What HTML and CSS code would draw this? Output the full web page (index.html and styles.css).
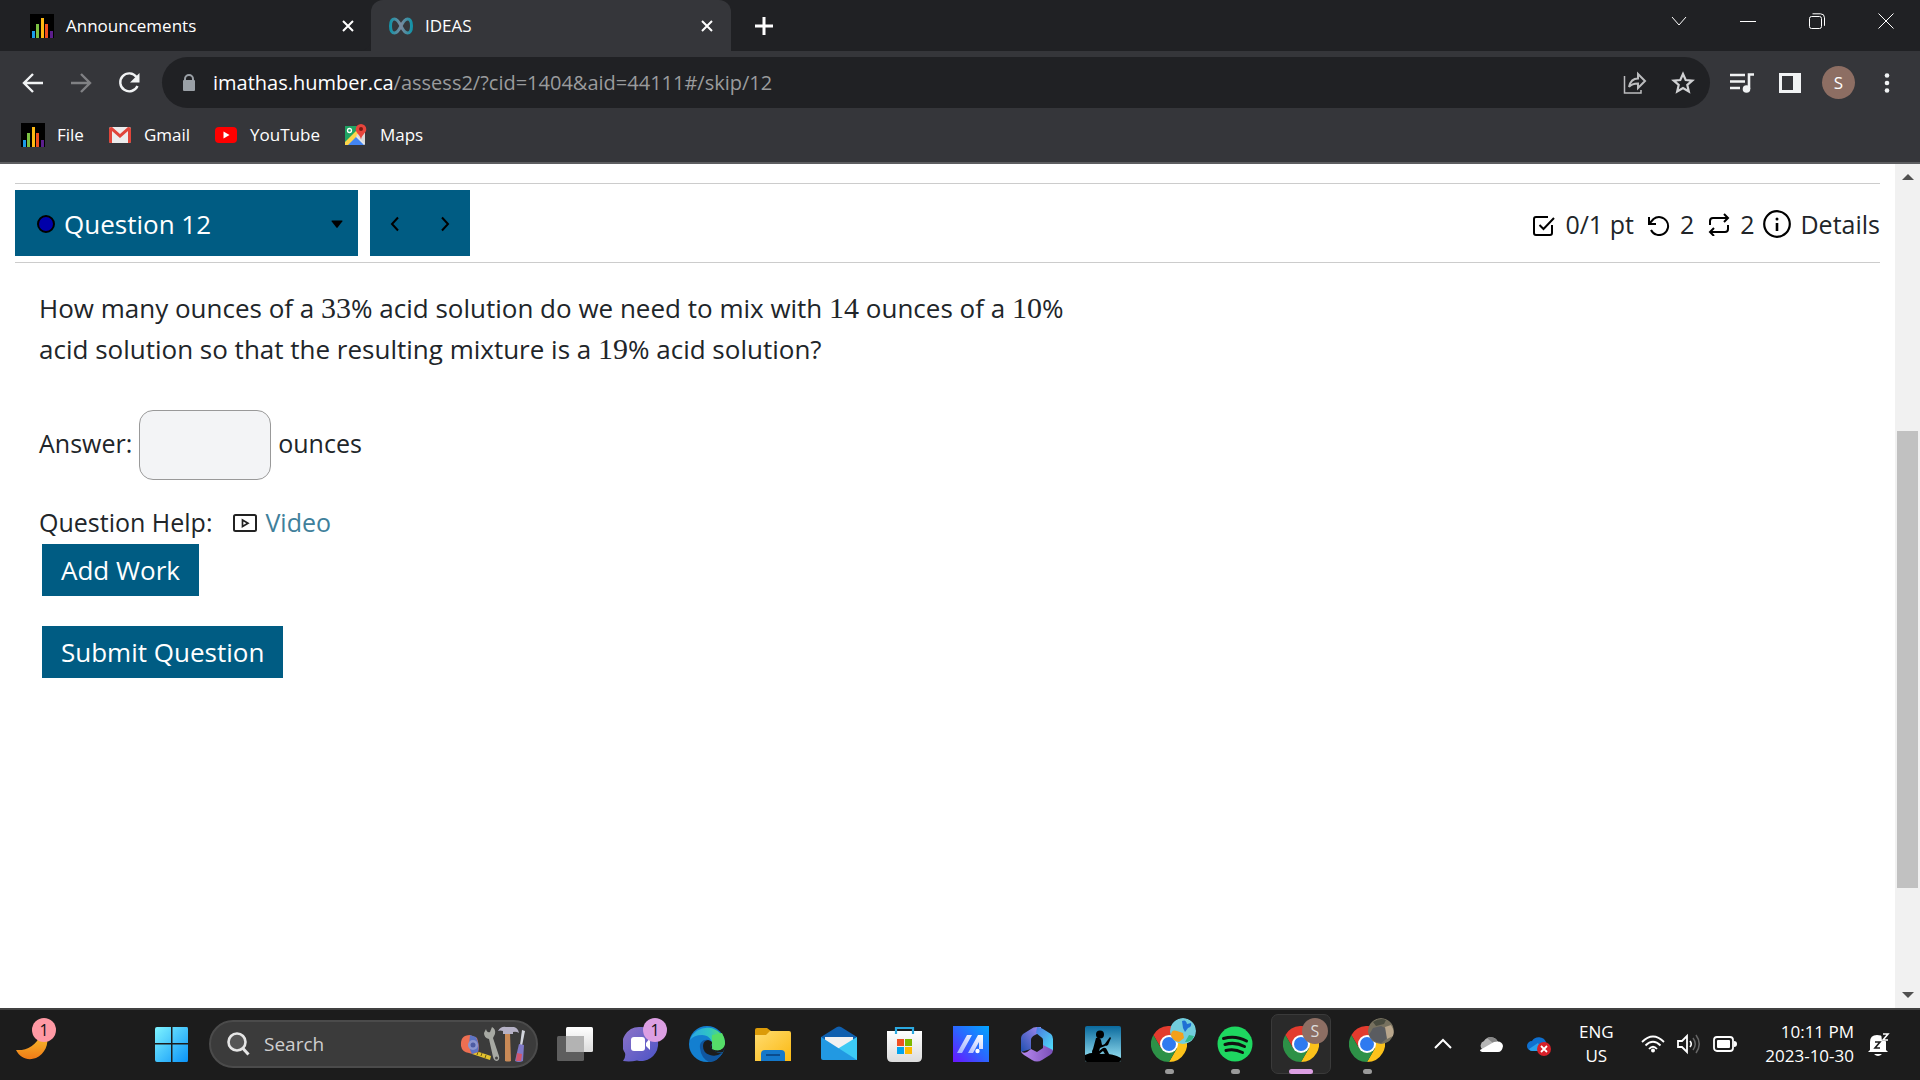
FILE: index.html
```html
<!DOCTYPE html>
<html lang="en">
<head>
<meta charset="utf-8">
<title>IDEAS</title>
<link rel="stylesheet" href="styles.css">
</head>
<body>
<svg class="defs" aria-hidden="true">
  <defs>
    <linearGradient id="gWin" x1="0" y1="0" x2="1" y2="1"><stop offset="0" stop-color="#7ff4ff"/><stop offset="1" stop-color="#0a93f8"/></linearGradient>
    <linearGradient id="gMoon" x1="0" y1="0" x2="0" y2="1"><stop offset="0" stop-color="#f6c32f"/><stop offset="1" stop-color="#f07a16"/></linearGradient>
    <linearGradient id="gChat" x1="0" y1="0" x2="1" y2="1"><stop offset="0" stop-color="#8e74c8"/><stop offset="1" stop-color="#4b53c6"/></linearGradient>
    <linearGradient id="gEdge1" x1="0" y1="0" x2="1" y2="0"><stop offset="0" stop-color="#2aa5e6"/><stop offset=".55" stop-color="#2fc4c4"/><stop offset="1" stop-color="#67e84d"/></linearGradient>
    <linearGradient id="gFold" x1="0" y1="0" x2="1" y2="1"><stop offset="0" stop-color="#ffdc70"/><stop offset="1" stop-color="#fbb912"/></linearGradient>
    <linearGradient id="gStore" x1="0" y1="0" x2="0" y2="1"><stop offset="0" stop-color="#ffffff"/><stop offset="1" stop-color="#dcdcdc"/></linearGradient>
    <linearGradient id="gMsi" x1="0" y1="1" x2="1" y2="0"><stop offset="0" stop-color="#6a14ff"/><stop offset=".5" stop-color="#2b66ff"/><stop offset="1" stop-color="#00a6ff"/></linearGradient>
    <linearGradient id="gSlash" x1="0" y1="1" x2="1" y2="0"><stop offset="0" stop-color="#9fb0ff"/><stop offset="1" stop-color="#fff"/></linearGradient>
    <linearGradient id="gM1" x1="0" y1="1" x2="1" y2="0"><stop offset="0" stop-color="#1f4fb0"/><stop offset="1" stop-color="#a58af0"/></linearGradient>
    <linearGradient id="gM2" x1="0" y1="0" x2="1" y2="1"><stop offset="0" stop-color="#4a78e0"/><stop offset="1" stop-color="#4fe2fb"/></linearGradient>
    <linearGradient id="gM3" x1="0" y1="0" x2="1" y2="0"><stop offset="0" stop-color="#b98af0"/><stop offset="1" stop-color="#7a4fb8"/></linearGradient>
    <linearGradient id="gSky" x1="0" y1="0" x2="0" y2="1"><stop offset="0" stop-color="#0a6a9e"/><stop offset="1" stop-color="#9ee6f5"/></linearGradient>
    <linearGradient id="gInf" x1="0" y1="0" x2="1" y2="0"><stop offset="0" stop-color="#1593a8"/><stop offset=".5" stop-color="#7b8a9e"/><stop offset="1" stop-color="#1593a8"/></linearGradient>
    <symbol id="bars" viewBox="0 0 24 24"><path fill="#000" d="M0 0h24v24H0z"/><path fill="#1b9be8" d="M2 17h3v7H2z"/><path fill="#7cc142" d="M6 10h3v14H6z"/><path fill="#fdb913" d="M11 4h3v20h-3z"/><path fill="#f0501e" d="M15 10h3v14h-3z"/><path fill="#5c1e8c" d="M20 17h3v7h-3z"/></symbol>
    <symbol id="close" viewBox="0 0 12 12"><path d="M1 1l10 10M11 1L1 11" stroke="#fff" stroke-width="2" fill="none"/></symbol>
    <symbol id="chrome" viewBox="0 0 36 36">
      <path fill="#e33b2e" d="M2.4 9A18 18 0 0 1 33.6 9H18l-7.8 13.5z"/>
      <path fill="#fcc21b" d="M33.6 9A18 18 0 0 1 18 36l7.8-13.5L18 9z"/>
      <path fill="#2d9147" d="M2.4 9l7.8 13.5L18 27l7.8-4.500L18 36A18 18 0 0 1 2.400 9z"/>
      <circle cx="18" cy="18" r="9" fill="#fff"/><circle cx="18" cy="18" r="7" fill="#2f7af0"/>
    </symbol>
  </defs>
</svg>

<header class="browser">
  <nav class="tabs" aria-label="Tabs">
    <div class="tab tab-first">
      <svg class="i24"><use href="#bars"/></svg><span class="tab-name">Announcements</span>
      <button class="plain" aria-label="Close Announcements"><svg class="i12"><use href="#close"/></svg></button>
    </div>
    <div class="tab tab-active">
      <svg class="i24" viewBox="0 0 24 24"><path d="M12 12C9.500 7 8 5 5.500 5S1.500 8 1.500 12s1.500 7 4 7S9.500 17 12 12s4-7 6.500-7 4 3 4 7-1.500 7-4 7S14.500 17 12 12z" fill="none" stroke="url(#gInf)" stroke-width="3"/></svg><span class="tab-name">IDEAS</span>
      <button class="plain" aria-label="Close IDEAS"><svg class="i12"><use href="#close"/></svg></button>
    </div>
    <button class="plain new-tab" aria-label="New tab"><svg class="i20" viewBox="0 0 20 20"><path d="M10 1v18M1 10h18" stroke="#fff" stroke-width="3"/></svg></button>
    <div class="window-controls">
      <button class="plain" aria-label="Search tabs"><svg class="i16" viewBox="0 0 16 16"><path d="M1 4l7 8 7-8" fill="none" stroke="#fff"/></svg></button>
      <button class="plain" aria-label="Minimize"><svg class="i16" viewBox="0 0 16 16"><path d="M0 8.500h16" stroke="#fff"/></svg></button>
      <button class="plain" aria-label="Restore"><svg class="i16" viewBox="0 0 16 16"><rect x=".5" y="3.500" width="12" height="12" rx="2" fill="none" stroke="#fff"/><path d="M3.500 .8h8q4 0 4 4v8" fill="none" stroke="#fff"/></svg></button>
      <button class="plain" aria-label="Close"><svg class="i16" viewBox="0 0 16 16"><path d="M.5.5l15 15M15.500.5l-15 15" stroke="#fff"/></svg></button>
    </div>
  </nav>

  <div class="toolbar">
    <button class="plain" aria-label="Back"><svg class="i24" viewBox="0 0 24 24"><path d="M12 3l-9 9 9 9M3 12h19" fill="none" stroke="#f1f3f4" stroke-width="2.400"/></svg></button>
    <button class="plain" aria-label="Forward"><svg class="i24" viewBox="0 0 24 24"><path d="M12 3l9 9-9 9M21 12H2" fill="none" stroke="#808184" stroke-width="2.400"/></svg></button>
    <button class="plain" aria-label="Reload"><svg class="i24" viewBox="0 0 24 24"><path d="M19.500 6A9 9 0 1 0 20.500 15" fill="none" stroke="#f1f3f4" stroke-width="2.400"/><path d="M22.500 2v9.500H13z" fill="#f1f3f4"/></svg></button>
    <div class="omnibox">
      <svg class="i20" viewBox="0 0 20 20"><path d="M6 9V6a4 4 0 0 1 8 0v3" fill="none" stroke="#9aa0a6" stroke-width="2"/><rect x="4" y="7" width="12" height="11" rx="1" fill="#9aa0a6"/></svg>
      <div class="url" role="textbox" aria-label="Address">imathas.humber.ca<span class="url-path">/assess2/?cid=1404&amp;aid=44111#/skip/12</span></div>
      <button class="plain" aria-label="Share"><svg class="i24" viewBox="0 0 24 24"><path d="M1.500 5v17H18v-3" fill="none" stroke="#bcbdbf" stroke-width="1.500"/><path d="M6 16C7 11 10 7.500 15 7.500V3l7 7-7 7v-4.500c-4 0-7 1-9 3.500z" fill="none" stroke="#bcbdbf" stroke-width="2"/></svg></button>
      <button class="plain" aria-label="Bookmark"><svg class="i24" viewBox="0 0 24 24"><path d="M12 3l2.700 6 6.600.6-5 4.400 1.500 6.500L12 17l-5.800 3.500L7.700 14l-5-4.400L9.300 9z" fill="none" stroke="#d0d1d3" stroke-width="2.200"/></svg></button>
    </div>
    <div class="tools">
      <button class="plain media" aria-label="Media"><svg class="i24" viewBox="0 0 24 24"><path d="M0 4h15M0 10.500h15M0 17h10M19 18V3.500h5" fill="none" stroke="#f1f3f4" stroke-width="2.600"/><circle cx="16.500" cy="18" r="3.800" fill="#f1f3f4"/></svg></button>
      <button class="plain" aria-label="Side panel"><svg class="i24" viewBox="0 0 24 24"><path fill-rule="evenodd" fill="#f1f3f4" d="M1 2h22v20H1zM4 5v14h11V5z"/></svg></button>
      <button class="plain avatar" aria-label="Profile">S</button>
      <button class="plain" aria-label="Menu"><svg class="i24" viewBox="0 0 24 24"><g fill="#f1f3f4"><circle cx="12" cy="4.500" r="2.300"/><circle cx="12" cy="12" r="2.300"/><circle cx="12" cy="19.500" r="2.300"/></g></svg></button>
    </div>
  </div>

  <nav class="bookmarks" aria-label="Bookmarks">
    <a href="#file"><svg class="i24"><use href="#bars"/></svg>File</a>
    <a href="#gmail"><svg class="i24" viewBox="0 0 24 24"><rect x="1" y="4" width="22" height="16" rx="2" fill="#ececec"/><path d="M1 6v13q0 1 2 1h1V8l8 7 8-7v12h1q2 0 2-1V6q0-2-3-2l-8 7-8-7Q1 4 1 6z" fill="#e0453a"/></svg>Gmail</a>
    <a href="#youtube"><svg class="i24" viewBox="0 0 24 24"><rect x="1" y="4" width="22" height="16" rx="4" fill="#f00"/><path d="M9.500 8.500v7l6-3.500z" fill="#fff"/></svg>YouTube</a>
    <a href="#maps"><svg class="i24" viewBox="0 0 24 24"><rect x="1" y="3" width="20" height="19" rx="1" fill="#e8e8e8"/><path d="M1 3h14v6L1 22z" fill="#1fa463"/><path d="M2 22l9-9 9 9z" fill="#4285f4"/><path d="M1 19L15 5l3 3L4 22H1z" fill="#fdd54a"/><path d="M12 12l9 9V11l-4-2z" fill="#dadada"/><circle cx="5.500" cy="7.500" r="2" fill="none" stroke="#fff" stroke-width="1.300"/><path d="M17 1a5.300 5.300 0 0 1 5.300 5.300c0 4-4.300 5-5.300 10.200-1-5.200-5.300-6.200-5.300-10.200A5.300 5.300 0 0 1 17 1z" fill="#e8453c"/><circle cx="17" cy="6" r="2" fill="#7d1a12"/></svg>Maps</a>
  </nav>
</header>

<div class="viewport">
  <main class="page">
    <div class="question-bar">
      <button class="blue picker"><span class="dot"></span><span class="picker-name">Question 12</span><svg class="i12" viewBox="0 0 12 12"><path d="M1 2.500h10q.8 0 .3 1L6.600 9.600q-.6.700-1.200 0L.7 3.500q-.5-1 .3-1z" fill="#000"/></svg></button>
      <div class="pager">
        <button class="blue" aria-label="Previous question"><svg class="i16" viewBox="0 0 16 16"><path d="M11 1.500L5 8l6 6.500" fill="none" stroke="#000" stroke-width="2"/></svg></button>
        <button class="blue" aria-label="Next question"><svg class="i16" viewBox="0 0 16 16"><path d="M5 1.500L11 8l-6 6.500" fill="none" stroke="#000" stroke-width="2"/></svg></button>
      </div>
      <div class="score">
        <svg class="i24" viewBox="0 0 24 24"><g fill="none" stroke="#000" stroke-width="2"><path d="M16 5H4q-2 0-2 2v14q0 2 2 2h14q2 0 2-2v-8"/><path d="M7.500 13l4 4L22 6"/></g></svg><span>0/1 pt</span>
        <svg class="i24" viewBox="0 0 24 24"><g fill="none" stroke="#000" stroke-width="2"><path d="M2 5v7h7"/><path d="M2.500 11.500l4-4.500A9 9 0 1 1 4 18"/></g></svg><span>2</span>
        <svg class="i24" viewBox="0 0 24 24"><g fill="none" stroke="#000" stroke-width="2"><path d="M17 2l4 4-4 4M3 13V9q0-3 3-3h15M7 24l-4-4 4-4M21 13v4q0 3-3 3H3"/></g></svg><span>2</span>
        <button class="plain details"><svg class="i28" viewBox="0 0 28 28"><circle cx="14" cy="14" r="12.800" fill="none" stroke="#000" stroke-width="2.200"/><path d="M14 13v8" stroke="#000" stroke-width="2.600"/><circle cx="14" cy="9" r="1.500"/></svg>Details</button>
      </div>
    </div>

    <section class="question">
      <p class="prompt">How many ounces of a <span class="math">33</span>% acid solution do we need to mix with <span class="math">14</span> ounces of a <span class="math">10</span>%<br>acid solution so that the resulting mixture is a <span class="math">19</span>% acid solution?</p>
      <div class="answer"><label for="answer">Answer:</label><input id="answer" type="text"><span>ounces</span></div>
      <div class="help"><span>Question Help:</span><svg class="i24" viewBox="0 0 24 24"><rect x="1" y="4" width="22" height="16" rx="1.500" fill="none" stroke="#222" stroke-width="2"/><path d="M9.500 9v6.500L15 12.200z" fill="none" stroke="#222" stroke-width="1.700"/></svg><a href="#video">Video</a></div>
      <div class="actions">
        <button class="blue action">Add Work</button>
        <button class="blue action">Submit Question</button>
      </div>
    </section>
  </main>
  <div class="scrollbar" aria-hidden="true">
    <svg class="i12" viewBox="0 0 12 12"><path d="M0 9l6-6 6 6z" fill="#505050"/></svg>
    <div class="track"><div class="before"></div><div class="thumb"></div><div class="after"></div></div>
    <svg class="i12" viewBox="0 0 12 12"><path d="M0 3l6 6 6-6z" fill="#505050"/></svg>
  </div>
</div>

<footer class="taskbar">
  <button class="plain app weather" aria-label="Weather"><svg class="i36" viewBox="0 0 36 36"><path d="M0 24C10 25 20 20 25 8q2-2 6 1c2 9-2 19-11 23-8 3-16 0-20-8z" fill="url(#gMoon)"/></svg><span class="badge pink">1</span></button>
  <div class="launch">
    <button class="plain" aria-label="Start"><svg class="i36" viewBox="0 0 36 36"><path d="M1 3q0-2 2-2h14v16H1zM18.500 1H33q1 0 1 2v14H18.500zM1 18.500h16V36H3q-2 0-2-2zM18.500 18.500H34V34q0 2-1 2H18.500z" fill="url(#gWin)"/></svg></button>
    <label class="search">
      <svg class="i24" viewBox="0 0 24 24"><circle cx="11" cy="10" r="8.500" fill="#555" stroke="#e6e6e6" stroke-width="2.600"/><path d="M17 16.500l5.500 6" stroke="#e6e6e6" stroke-width="3"/></svg>
      <input type="text" placeholder="Search" aria-label="Search">
      <svg class="toolkit" viewBox="0 0 66 36">
        <path d="M13 24l18 6-1 4-18-6z" fill="#e2c22f"/><path d="M18 26l-1 3M22 27l-1 3M26 29l-1 3" stroke="#6e5a10"/>
        <path d="M1 20Q0 9 10 9l7 3q3 9 1 14-5 3-9 1Q2 26 1 20z" fill="#ee6f52"/><path d="M10 9l6 2q4 8 2 15l-6 2q-4-6-2-19z" fill="#5d74c4"/><circle cx="13" cy="19" r="5" fill="#8b95cf"/><circle cx="13" cy="19" r="2.500" fill="#4d5ca4"/>
        <path d="M26 3q1 4 4 3l2-5q4 2 3 7l-2 4 6 18q1 4-2 5-3 0-4-4l-4-18q-5-1-5-6z" fill="#a7a9a3"/><circle cx="36.500" cy="32" r="1.500" fill="#444"/>
        <path d="M45 7h5l1 28q-3 1-6 0z" fill="#c98a57"/><path d="M38 5q3-5 8-4h8q4 1 5 6-3-2-6-1v2H43V5q-3-1-5 0z" fill="#b5b1c6"/>
        <path d="M62 4l3 1-3 15-2-1z" fill="#d3d6dd"/><path d="M59 18l5 1-1 16q-4 2-8 0z" fill="#7f79c7"/><path d="M57 27l5 1-1 7h-5z" fill="#d0566e"/>
      </svg>
    </label>
    <button class="plain app" aria-label="Task view"><svg class="i36" viewBox="0 0 36 36"><rect x="9" y="1" width="27" height="25" rx="1.500" fill="url(#gStore)"/><rect y="10" width="27" height="25" rx="1.500" fill="#5e5e5e"/><path d="M9 10h18v16H9z" fill="#b3b3b3"/></svg></button>
    <button class="plain app" aria-label="Chat"><svg class="i36" viewBox="0 0 36 36"><path d="M18 1a17 17 0 1 1-4 33.500Q7 36 0 35q3-4 2-8A17 17 0 0 1 18 1z" fill="url(#gChat)"/><rect x="8" y="11" width="14" height="14" rx="3" fill="#fff"/><path d="M23 17l4-5v12l-4-4z" fill="#fff"/></svg><span class="badge lilac">1</span></button>
    <button class="plain app" aria-label="Edge"><svg class="i36" viewBox="0 0 36 36"><circle cx="18" cy="18" r="18" fill="#137fd0"/><path d="M1 14A18 18 0 0 1 36 18c0 7-8 8-12 5-1-1-3-2-1-5 0-5-4-9-10-9Q5 9 1 14z" fill="url(#gEdge1)"/><path d="M11 22c-1-6 4-9 8-8q4 1 4 4-2 1-1 4 5 6 12 4-5 10-14 10-8-4-9-14z" fill="#10569f"/><path d="M23 18q-2 2-1 4 4 6 12 4l3-6-2-2q-1 7-8 6-5-1-4-6z" fill="#1c1c1c"/><path d="M14 20q0-5 5-6 5 1 4 4-2 1-1 4 5 6 11 5-6 4-12 2-7-2-7-9z" fill="#1c1c1c"/><path d="M36 17c0 7-8 9-13 6 0-2 1-3 0-6V9l10-2q3 5 3 10z" fill="#55dd68"/></svg></button>
    <button class="plain app" aria-label="File Explorer"><svg class="i36" viewBox="0 0 36 36"><path d="M0 4q0-2 2-2h10l4 3v6H0z" fill="#dc9b08"/><path d="M0 9h11l4-4h19q2 0 2 2v28H0z" fill="url(#gFold)"/><path d="M6 35v-7q0-4 4-4h16q4 0 4 4v7z" fill="#1478ca"/><path d="M11 29h14" stroke="#0b4c8d" stroke-width="2"/></svg></button>
    <button class="plain app" aria-label="Mail"><svg class="i36" viewBox="0 0 36 36"><path d="M0 11L16 1q2-1 4 0l16 10v4H0z" fill="#0f5fae"/><path d="M4 11h28v10L18 28 4 21z" fill="#f1f1f1"/><path d="M36 11v23H4l14-12z" fill="#3ccaf4"/><path d="M0 11l36 23H2q-2 0-2-2z" fill="#2299e2"/></svg></button>
    <button class="plain app" aria-label="Store"><svg class="i36" viewBox="0 0 36 36"><path d="M0 5h35v26q0 5-5 5H5q-5 0-5-5z" fill="url(#gStore)"/><path d="M9 8V2h17v6" fill="none" stroke="#2ba9e0" stroke-width="2.200"/><path d="M10 13h7v7h-7z" fill="#f05023"/><path d="M18 13h7v7h-7z" fill="#7db900"/><path d="M10 21h7v7h-7z" fill="#01a3ee"/><path d="M18 21h7v7h-7z" fill="#feb800"/></svg></button>
    <button class="plain app" aria-label="MSI Center"><svg class="i36" viewBox="0 0 36 36"><path d="M0 0h36v36H0z" fill="url(#gMsi)"/><path d="M4 27L14 9h5L9 27zM15 27L25 9h5v14h-4v-7l-6 11z" fill="url(#gSlash)"/><circle cx="24.500" cy="25" r="2.200" fill="#fff"/></svg></button>
    <button class="plain app" aria-label="Microsoft 365"><svg class="i36" viewBox="0 0 36 36"><path d="M18 1q-4 0-6 2L4 8q-2 2-2 4v14l10-3V14q0-3 4-5l6-3V1z" fill="url(#gM1)"/><path d="M18 1q3 0 6 2l8 5q2 2 2 5v12l-10-4v-7q0-2-2-3l-5-4z" fill="url(#gM2)"/><path d="M2 25q2 3 6 1l4-3 6 3 6-4 0-3 10 5q0 3-3 5l-8 5q-5 3-10 0l-8-5q-3-2-3-4z" fill="url(#gM3)"/><path d="M18 12l6 4v5l-6 4-6-4v-5z" fill="#1c1c1c"/></svg></button>
    <button class="plain app" aria-label="Kindle"><svg class="i36" viewBox="0 0 36 36"><rect width="36" height="36" rx="2" fill="url(#gSky)"/><path d="M0 29q8-4 16-1 10-1 20 4v2q0 2-2 2H2q-2 0-2-2z"/><circle cx="15" cy="8.500" r="4"/><path d="M11 12q4-1 5 2l1 5 4-1-1 2-5 2-1 3 4-3q3-1 4 2l2 4h-4l-2-3-5 4H8q-2-3 0-6z"/><path d="M19 19l6-8 1 1-3 7-2 1z"/></svg></button>
    <button class="plain app running" aria-label="Chrome"><svg class="i36"><use href="#chrome"/></svg><svg class="profile" viewBox="0 0 26 26"><circle cx="13" cy="13" r="13" fill="#72cddd"/><path d="M1 18q0-7 6-5l6 2 1 5-5 4Q3 23 1 18z" fill="#f4a01c"/><path d="M12 3q4-2 5 3l4-1q1 4-3 5l-3 4-2-4z" fill="#1f6fd4"/><path d="M15 24l4-7 5 1q-2 6-9 6z" fill="#33b98c"/></svg></button>
    <button class="plain app running" aria-label="Spotify"><svg class="i36" viewBox="0 0 36 36"><circle cx="18" cy="18" r="17.500" fill="#1ed760"/><path d="M6.500 12.500q12-3.500 23 2.500M8 18.500q10-3 19.500 2M9 24.500q8.500-2 16.500 2" fill="none" stroke="#111" stroke-width="3" stroke-linecap="round"/></svg></button>
    <button class="plain app running current" aria-label="Chrome, IDEAS"><svg class="i36"><use href="#chrome"/></svg><span class="profile letter">S</span></button>
    <button class="plain app running" aria-label="Chrome, third profile"><svg class="i36"><use href="#chrome"/></svg><svg class="profile" viewBox="0 0 26 26"><circle cx="13" cy="13" r="13" fill="#77715f"/><path d="M1 17l4-7 8-2 6 3 2 8-8 6Q4 24 1 17z" fill="#5a5c60"/><path d="M17 9l6-2q4 6 2 11l-6 3z" fill="#b9a68c"/><path d="M5 4q7-5 13-2l-2 4-8 2z" fill="#4a4c40"/></svg></button>
  </div>
  <div class="tray">
    <button class="plain" aria-label="Hidden icons"><svg class="i24" viewBox="0 0 24 24"><path d="M4 16l8-8 8 8" fill="none" stroke="#fff" stroke-width="2"/></svg></button>
    <svg class="i24" viewBox="0 0 24 24"><path d="M4 18a5 5 0 0 1 1-9 8 8 0 0 1 14 1 5 5 0 0 1 3 8z" fill="#b5b5b5"/><path d="M8 6a8 8 0 0 1 11 4l-5 1z" fill="#878787"/><path d="M1 18l14-8q8-2 9 4-1 6-5 6H5q-4 0-4-2z" fill="#fff"/></svg>
    <svg class="i24" viewBox="0 0 24 24"><path d="M5 19a5 5 0 0 1 0-10 8 8 0 0 1 14 1v9z" fill="#0f6fce"/><path d="M2 17l9-6 5 8H5q-2 0-3-2z" fill="#28a0ec"/><circle cx="17" cy="17" r="7" fill="#d8202a"/><path d="M14 14l6 6M20 14l-6 6" stroke="#fff" stroke-width="1.800"/></svg>
    <button class="plain lang">ENG<br>US</button>
    <div class="status">
      <svg class="i24" viewBox="0 0 24 24"><g fill="none" stroke="#fff" stroke-width="1.800"><path d="M1 10q11-11 22 0M4.500 13.500q7.500-7.500 15 0M8 17q4-4.500 8 0"/></g><circle cx="12" cy="18.500" r="2" fill="#fff"/></svg>
      <svg class="i24" viewBox="0 0 24 24"><path d="M1 9h4l5-5v16l-5-5H1z" fill="none" stroke="#fff" stroke-width="1.800"/><path d="M13 9q2.500 3 0 6" fill="none" stroke="#fff" stroke-width="1.600"/><path d="M16 6q4.500 6 0 12M19 3q6.500 9 0 18" fill="none" stroke="#666" stroke-width="1.500"/></svg>
      <svg class="i24" viewBox="0 0 24 24"><rect x="1" y="5" width="19" height="14" rx="3" fill="none" stroke="#fff" stroke-width="1.800"/><rect x="4" y="8" width="13" height="8" rx="1" fill="#fff"/><path d="M21 9q3 0 3 3t-3 3z" fill="#fff"/></svg>
    </div>
    <time class="clock" datetime="2023-10-30T22:11">10:11 PM<br>2023-10-30</time>
    <svg class="i24" viewBox="0 0 24 24"><path d="M4 18V10q0-7 7-7 8 0 9 7v8l2 2H2z" fill="#fff"/><path d="M8 22h8q-4 4-8 0z" fill="#fff"/><path d="M15 1h8v8h-7z" fill="#1c1c1c"/><path d="M9 10h5l-5 6h5" fill="none" stroke="#1c1c1c" stroke-width="1.600"/><path d="M17 2h5l-5 6h5" fill="none" stroke="#fff" stroke-width="1.600"/></svg>
  </div>
</footer>
</body>
</html>
```
FILE: styles.css
```css
* { box-sizing: border-box; }

body {
  margin: 0;
  min-height: 100vh;
  display: flex;
  flex-direction: column;
  font-family: "Open Sans", "Noto Sans", sans-serif;
  background: #fff;
  color: #212529;
}

button, input { font: inherit; color: inherit; }
a { color: inherit; text-decoration: none; }
svg { display: block; flex: none; }
.defs { position: absolute; width: 0; height: 0; }
.i12 { width: 12px; height: 12px; }
.i16 { width: 16px; height: 16px; }
.i20 { width: 20px; height: 20px; }
.i24 { width: 24px; height: 24px; }
.i28 { width: 28px; height: 28px; }
.i36 { width: 36px; height: 36px; }
.plain { border: 0; background: none; padding: 0; display: flex; align-items: center; justify-content: center; flex: none; }

/* Browser chrome */
.browser { background: #35363a; color: #fff; border-bottom: 2px solid #5d5e61; font-size: 17px; }
.tabs { display: flex; background: #202124; height: 51px; }
.tab { display: flex; align-items: center; gap: 12px; width: 360px; padding: 0 18px; background: #202124; }
.tab-first { width: 371px; padding-left: 30px; padding-right: 17px; border-bottom-right-radius: 12px; }
.tab-active { background: #35363a; border-radius: 12px 12px 0 0; }
.tab-name { flex: 1; }
.new-tab { width: 65px; }
.window-controls { margin-left: auto; display: flex; height: 42px; }
.window-controls .plain { width: 69px; }

.toolbar { display: flex; align-items: center; padding: 6px 21px 5px; gap: 24px; }
.omnibox { flex: 1; height: 51px; border-radius: 26px; background: #202124; display: flex; align-items: center; gap: 24px; padding: 0 15px 0 17px; margin: 0 -4px 0 -3px; }
.url { flex: 1; font-size: 20px; margin-left: -10px; }
.url-path { color: #9a9b9d; }
.tools { display: flex; align-items: center; gap: 20px; }
.media { padding-right: 4px; }
.avatar { width: 33px; height: 33px; border-radius: 50%; background: #8d6e63; font-size: 17px; }

.bookmarks { display: flex; gap: 24px; padding: 10px 21px 15px; }
.bookmarks a { display: flex; align-items: center; gap: 12px; line-height: 24px; }

/* Assessment page */
.viewport { flex: 1; display: flex; }
.page { flex: 1; padding: 19px 15px 20px; font-size: 26px; }
.question-bar { display: flex; align-items: center; gap: 12px; padding: 6px 0; border-top: 1px solid #ccc; border-bottom: 1px solid #ccc; }
.blue { background: #005c83; color: #fff; border: 0; border-radius: 0; display: flex; align-items: center; justify-content: center; }
.picker { width: 343px; height: 66px; padding: 2px 15px 0 22px; gap: 9px; text-align: left; }
.dot { width: 18px; height: 18px; border-radius: 50%; background: #00a; border: 2px solid #000; }
.picker-name { flex: 1; }
.pager { display: flex; }
.pager .blue { width: 50px; height: 66px; padding: 2px 0 0; }
.score { margin-left: auto; padding-top: 2px; display: flex; align-items: center; gap: 9px; font-size: 25px; }
.score span + .i24 { margin-left: 4px; }
.details { gap: 9px; }

.question { padding: 25px 24px 24px; }
.prompt { margin: 0; max-width: 1060px; line-height: 41px; }
.math { font-family: "Liberation Serif", serif; font-size: 30px; line-height: 30px; }
.answer { display: flex; align-items: center; gap: 7px; margin: 40px 0 21px; font-size: 25px; line-height: 34px; }
.answer label, .answer span { padding-bottom: 4px; }
.answer input { width: 132px; height: 70px; padding: 0 16px; border: 1px solid #999; border-radius: 14px; background: #f3f4f6; }
.help { display: flex; align-items: center; gap: 8px; font-size: 25px; line-height: 43px; }
.help span { margin-right: 13px; }
.help a { color: #40809b; }
.actions { display: flex; flex-direction: column; align-items: flex-start; gap: 30px; padding-left: 3px; }
.action { height: 52px; padding: 0 19px; }

.scrollbar { width: 25px; background: #f1f1f1; display: flex; flex-direction: column; align-items: center; gap: 6px; padding: 7px 0; }
.track { flex: 1; width: 21px; display: flex; flex-direction: column; }
.before { flex: 242; }
.thumb { flex: 457; background: #c1c1c1; }
.after { flex: 95; }

/* Taskbar */
.taskbar { display: flex; align-items: center; height: 72px; padding: 0 30px 2px 16px; background: #1c1c1c; border-top: 2px solid #414141; color: #fff; font-size: 17px; }
.launch { display: flex; align-items: center; margin-left: 102px; }
.search { display: flex; align-items: center; gap: 14px; width: 329px; height: 48px; margin: 0 4px 0 19px; padding: 0 10px 0 15px; border: 2px solid #4b4b4b; border-radius: 24px; background: #3b3b3b; }
.search input { flex: 1; min-width: 0; padding: 0; border: 0; background: none; font-size: 19px; }
.search input::placeholder { color: #cfcfcf; opacity: 1; }
.toolkit { width: 66px; height: 36px; }
.app { position: relative; width: 66px; height: 60px; }
.weather { width: 36px; }
.badge { position: absolute; top: 4px; right: 7px; width: 24px; height: 24px; border-radius: 50%; color: #111; font-size: 16px; line-height: 24px; }
.weather .badge { right: -4px; }
.pink { background: #ff99a4; }
.lilac { background: #dc9fe3; }
.running::after { content: ""; position: absolute; bottom: 0; width: 9px; height: 5px; border-radius: 3px; background: #9a9a9a; }
.current::before { content: ""; position: absolute; inset: 0 3px 0 3px; border-radius: 7px; background: #2a2a2a; border: 1px solid #3a3a3a; }
.current .i36 { position: relative; }
.current::after { width: 24px; background: #dc9fe3; }
.profile { position: absolute; top: 4px; right: 6px; width: 26px; height: 26px; border-radius: 50%; }
.letter { background: #8d6e63; color: #ddd; font-size: 16px; line-height: 26px; }
.tray { margin-left: auto; display: flex; align-items: center; gap: 24px; line-height: 24px; }
.lang { text-align: center; width: 42px; }
.status { display: flex; gap: 12px; }
.clock { text-align: right; margin: 0 -12px 0 4px; }
```
